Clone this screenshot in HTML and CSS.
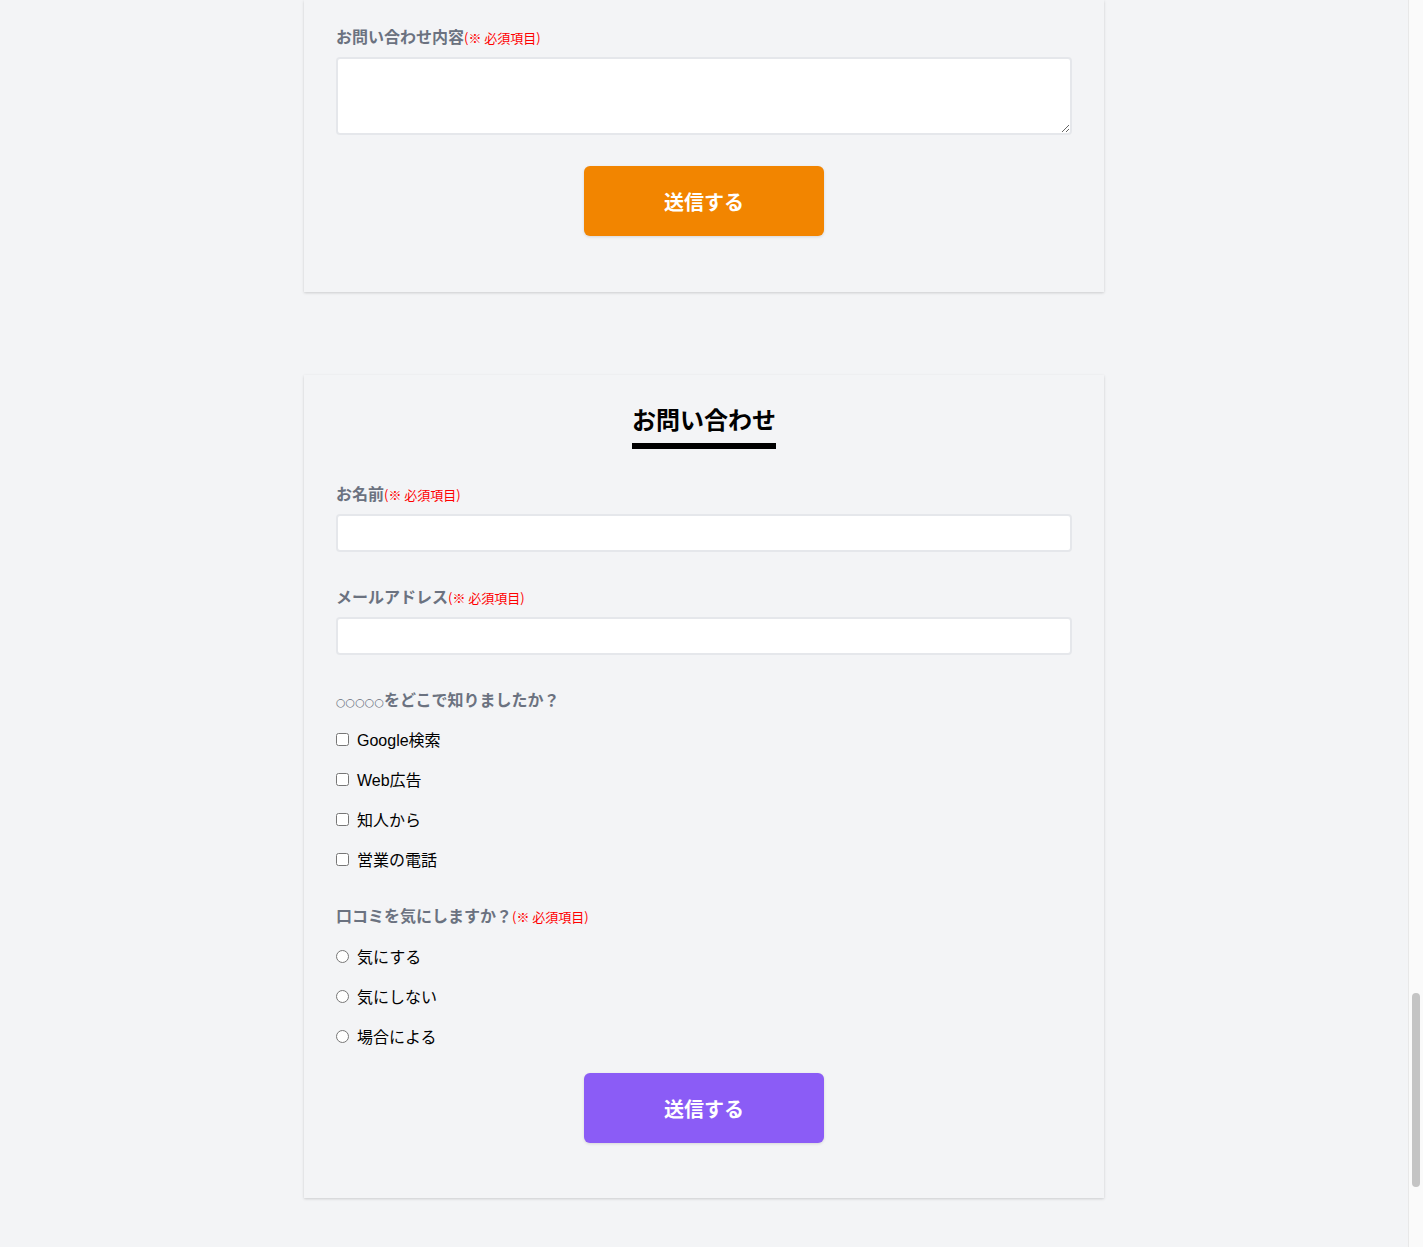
FILE: index.html
```html
<!DOCTYPE html>
<html lang="ja">
<head>
  <meta charset="utf-8">
  <link rel="stylesheet" href="styles.css">
</head>
<body>
  <div class="viewport">
    <main class="page">
      <section class="card card-cut">
        <div class="form-group">
          <label class="field-label">お問い合わせ内容<span class="required">(※ 必須項目)</span></label>
          <textarea class="field-textarea"></textarea>
        </div>
        <div class="submit-row first-submit">
          <button class="submit-btn orange" type="button">送信する</button>
        </div>
      </section>

      <section class="card">
        <div class="card-title">
          <h2>お問い合わせ</h2>
        </div>

        <div class="form-group">
          <label class="field-label">お名前<span class="required">(※ 必須項目)</span></label>
          <input class="field-input" type="text">
        </div>

        <div class="form-group">
          <label class="field-label">メールアドレス<span class="required">(※ 必須項目)</span></label>
          <input class="field-input" type="email">
        </div>

        <div class="form-group">
          <div class="field-label"><span class="marks">○○○○○</span>をどこで知りましたか？</div>
          <label class="option"><input type="checkbox">Google検索</label>
          <label class="option"><input type="checkbox">Web広告</label>
          <label class="option"><input type="checkbox">知人から</label>
          <label class="option"><input type="checkbox">営業の電話</label>
        </div>

        <div class="form-group form-group-last">
          <div class="field-label">口コミを気にしますか？<span class="required">(※ 必須項目)</span></div>
          <label class="option radio"><input type="radio" name="review">気にする</label>
          <label class="option radio"><input type="radio" name="review">気にしない</label>
          <label class="option radio"><input type="radio" name="review">場合による</label>
        </div>

        <div class="submit-row">
          <button class="submit-btn purple" type="button">送信する</button>
        </div>
      </section>
    </main>

    <div class="scrollbar">
      <div class="scrollbar-thumb"></div>
    </div>
  </div>
</body>
</html>
```

FILE: styles.css
```css
html, body {
  margin: 0;
  padding: 0;
  height: 100%;
  overflow: hidden;
}

body {
  font-family: "Liberation Sans", "Noto Sans CJK JP", sans-serif;
  background: #f3f4f6;
  color: #000;
}

.viewport {
  display: flex;
  height: 100vh;
}

.page {
  flex: 1;
  display: flex;
  flex-direction: column;
  align-items: center;
}

.card {
  width: 800px;
  box-sizing: border-box;
  padding: 26px 32px 55px;
  background: #f3f4f6;
  box-shadow: 0 1px 3px rgba(0, 0, 0, 0.12), 0 1px 2px rgba(0, 0, 0, 0.05);
}

.card-cut {
  padding-top: 24px;
  padding-bottom: 56px;
  margin-bottom: 83px;
}

.card-title {
  text-align: center;
  margin-bottom: 32px;
}

.card-title h2 {
  display: inline-block;
  margin: 0;
  padding-bottom: 6px;
  font-family: "Noto Sans CJK JP", sans-serif;
  font-size: 24px;
  line-height: 36px;
  font-weight: 700;
  color: #000;
  border-bottom: 6px solid #000;
}

.form-group {
  margin-bottom: 32px;
}

.form-group-last {
  margin-bottom: 25px;
}

.card-cut .form-group {
  margin-bottom: 0;
}

.field-label {
  display: flex;
  align-items: baseline;
  height: 24px;
  margin-bottom: 9px;
  font-family: "Noto Sans CJK JP", sans-serif;
  font-size: 16px;
  line-height: 24px;
  font-weight: 700;
  color: #6b7280;
}

.required {
  font-size: 13px;
  font-weight: 400;
  color: #ff0000;
}

.marks {
  font-family: "DejaVu Sans", sans-serif;
  font-size: 11px;
  font-weight: 400;
}

.field-input,
.field-textarea {
  display: block;
  width: 100%;
  box-sizing: border-box;
  border: 2px solid #e5e7eb;
  border-radius: 4px;
  background: #fff;
  outline: none;
}

.field-input {
  height: 38px;
}

.field-textarea {
  height: 78px;
  resize: vertical;
}

.option {
  display: flex;
  align-items: center;
  height: 24px;
  margin-top: 16px;
  font-size: 16px;
  color: #000;
}

/* margins collapse with the label's margin-bottom */
.form-group .field-label + .option {
  margin-top: 16px;
}

.form-group .field-label + .option.radio {
  margin-top: 17px;
}

.option input {
  width: 13px;
  height: 13px;
  margin: 0 8px 0 0;
}

.submit-row {
  display: flex;
  justify-content: center;
}

.first-submit {
  margin-top: 31px;
}

.submit-btn {
  width: 240px;
  height: 70px;
  border: none;
  border-radius: 6px;
  color: #fff;
  font-family: "Noto Sans CJK JP", sans-serif;
  font-size: 20px;
  font-weight: 700;
  box-shadow: 0 1px 3px rgba(0, 0, 0, 0.12);
  cursor: pointer;
}

.submit-btn.orange {
  background: #f28500;
}

.submit-btn.purple {
  background: #8b5cf6;
}

.scrollbar {
  width: 14px;
  flex-shrink: 0;
  background: #fafafa;
  border-left: 1px solid #e8e8e8;
  display: flex;
  flex-direction: column;
  align-items: center;
}

.scrollbar-thumb {
  width: 8px;
  height: 194px;
  margin-top: 993px;
  border-radius: 4px;
  background: #c4c4c4;
}
```
